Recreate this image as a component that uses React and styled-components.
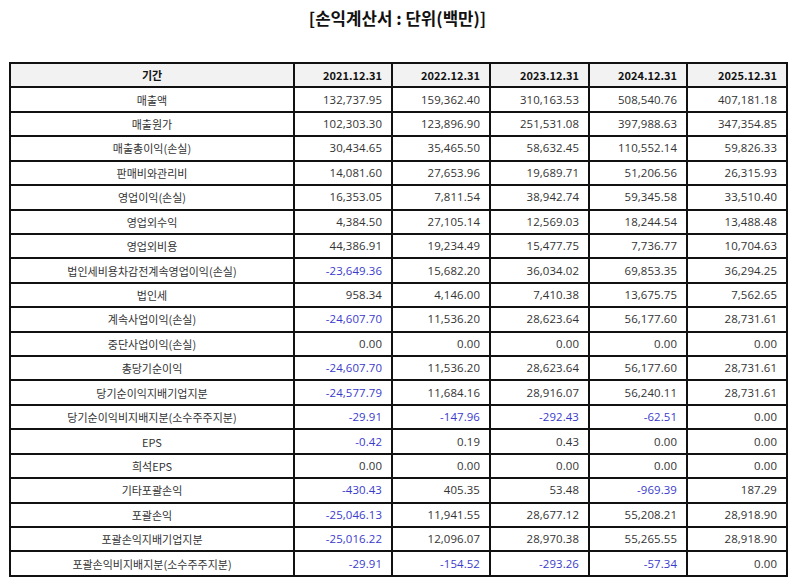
import React from "react";
import styled, { createGlobalStyle } from "styled-components";

const Global = createGlobalStyle`
  html, body { margin: 0; padding: 0; background: #fff; }
  body { font-family: "Noto Sans CJK KR", "Noto Sans", sans-serif; color: #111; }
`;

const Page = styled.div`
  width: 794px;
  padding: 6px 8px 0 9px;
  box-sizing: border-box;
`;

const Title = styled.h1`
  margin: 0 0 24px;
  height: 32px;
  text-align: center;
  font-size: 16.8px;
  font-weight: 700;
  line-height: 24px;
  color: #111;
`;

const Table = styled.table`
  width: 777px;
  border-collapse: collapse;
  table-layout: fixed;
  border: 2px solid #111;
`;

const Col = styled.col`
  width: ${(p) => p.$w}px;
`;

const Row = styled.tr`
  height: 24.43px;
`;

const Th = styled.th`
  background: #f2f2f2;
  border: 2px solid #111;
  font-size: 11px;
  font-weight: 700;
  text-align: ${(p) => (p.$label ? "center" : "right")};
  padding: 0 ${(p) => (p.$label ? "0" : "9px")};
  line-height: 14px;
  white-space: nowrap;
  color: #111;
`;

const Label = styled.td`
  border: 2px solid #111;
  font-size: 11px;
  text-align: center;
  padding: 0;
  line-height: 14px;
  white-space: nowrap;
  color: #333;
`;

const Num = styled.td`
  border: 2px solid #111;
  font-family: "Open Sans", "Noto Sans", sans-serif;
  font-size: 11.4px;
  font-weight: 400;
  text-align: right;
  padding: 0 9px 0 0;
  line-height: 14px;
  white-space: nowrap;
  letter-spacing: 0.1px;
  color: ${(p) => (p.$neg ? "#3a3acc" : "#333")};
`;

const widths = [284, 98, 98, 99, 98, 100];

const years = ["2021.12.31", "2022.12.31", "2023.12.31", "2024.12.31", "2025.12.31"];

const rows = [
  ["매출액", "132,737.95", "159,362.40", "310,163.53", "508,540.76", "407,181.18"],
  ["매출원가", "102,303.30", "123,896.90", "251,531.08", "397,988.63", "347,354.85"],
  ["매출총이익(손실)", "30,434.65", "35,465.50", "58,632.45", "110,552.14", "59,826.33"],
  ["판매비와관리비", "14,081.60", "27,653.96", "19,689.71", "51,206.56", "26,315.93"],
  ["영업이익(손실)", "16,353.05", "7,811.54", "38,942.74", "59,345.58", "33,510.40"],
  ["영업외수익", "4,384.50", "27,105.14", "12,569.03", "18,244.54", "13,488.48"],
  ["영업외비용", "44,386.91", "19,234.49", "15,477.75", "7,736.77", "10,704.63"],
  ["법인세비용차감전계속영업이익(손실)", "-23,649.36", "15,682.20", "36,034.02", "69,853.35", "36,294.25"],
  ["법인세", "958.34", "4,146.00", "7,410.38", "13,675.75", "7,562.65"],
  ["계속사업이익(손실)", "-24,607.70", "11,536.20", "28,623.64", "56,177.60", "28,731.61"],
  ["중단사업이익(손실)", "0.00", "0.00", "0.00", "0.00", "0.00"],
  ["총당기순이익", "-24,607.70", "11,536.20", "28,623.64", "56,177.60", "28,731.61"],
  ["당기순이익지배기업지분", "-24,577.79", "11,684.16", "28,916.07", "56,240.11", "28,731.61"],
  ["당기순이익비지배지분(소수주주지분)", "-29.91", "-147.96", "-292.43", "-62.51", "0.00"],
  ["EPS", "-0.42", "0.19", "0.43", "0.00", "0.00"],
  ["희석EPS", "0.00", "0.00", "0.00", "0.00", "0.00"],
  ["기타포괄손익", "-430.43", "405.35", "53.48", "-969.39", "187.29"],
  ["포괄손익", "-25,046.13", "11,941.55", "28,677.12", "55,208.21", "28,918.90"],
  ["포괄손익지배기업지분", "-25,016.22", "12,096.07", "28,970.38", "55,265.55", "28,918.90"],
  ["포괄손익비지배지분(소수주주지분)", "-29.91", "-154.52", "-293.26", "-57.34", "0.00"],
];

export default function App() {
  return (
    <>
      <Global />
      <Page>
        <Title>[손익계산서 : 단위(백만)]</Title>
        <Table>
          <colgroup>
            {widths.map((w, i) => (
              <Col key={i} $w={w} />
            ))}
          </colgroup>
          <thead>
            <Row>
              <Th $label>기간</Th>
              {years.map((y) => (
                <Th key={y}>{y}</Th>
              ))}
            </Row>
          </thead>
          <tbody>
            {rows.map(([label, ...vals]) => (
              <Row key={label}>
                <Label>{label}</Label>
                {vals.map((v, i) => (
                  <Num key={i} $neg={v.startsWith("-")}>
                    {v}
                  </Num>
                ))}
              </Row>
            ))}
          </tbody>
        </Table>
      </Page>
    </>
  );
}
